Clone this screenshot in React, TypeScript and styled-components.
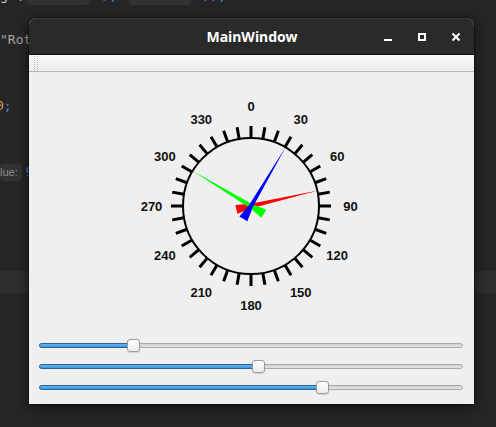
import React from "react";
import styled, { createGlobalStyle } from "styled-components";

const GlobalStyle = createGlobalStyle`
  html, body {
    margin: 0;
    padding: 0;
    background: #262626;
  }
  body {
    width: 496px;
    height: 427px;
    overflow: hidden;
    font-family: "Liberation Sans", Arial, sans-serif;
  }
`;

const Desktop = styled.div`
  position: relative;
  width: 496px;
  height: 427px;
  overflow: hidden;
  background: #262626;
`;

/* editor behind the window */
const Editor = styled.div`
  margin-top: -15px;
  font-family: "DejaVu Sans Mono", "Liberation Mono", monospace;
  font-size: 13px;
  color: #d0d0d0;
`;

const CodeLine = styled.div<{ $current?: boolean; $indent?: number }>`
  height: 22px;
  line-height: 22px;
  white-space: pre;
  text-indent: ${(p) => p.$indent ?? 0}px;
  background: ${(p) => (p.$current ? "#2e2e2e" : "transparent")};
`;

const Str = styled.span`
  color: #a9a9a9;
`;

const Num = styled.span`
  color: #d89b4c;
`;

const Punct = styled.span`
  color: #3b8be0;
`;

const Hint = styled.span<{ $w?: number }>`
  display: inline-block;
  width: ${(p) => (p.$w ? `${p.$w}px` : "auto")};
  height: 17px;
  line-height: 17px;
  padding: 0 4px 0 0;
  margin: 0 4px;
  vertical-align: middle;
  border-radius: 4px;
  background: #333333;
  color: #8c8c8c;
  font-family: "Liberation Sans", Arial, sans-serif;
  font-size: 11px;
  text-indent: 0;
`;

/* the Qt window */
const Window = styled.div`
  position: absolute;
  left: 29px;
  top: 18px;
  width: 445px;
  height: 386px;
  display: flex;
  flex-direction: column;
  border-radius: 8px 8px 0 0;
  overflow: hidden;
  background: #efefef;
  box-shadow: 0 3px 14px rgba(0, 0, 0, 0.6), 0 0 0 1px rgba(0, 0, 0, 0.35);
`;

const TitleBar = styled.div`
  flex: none;
  height: 36px;
  display: grid;
  grid-template-columns: 1fr auto 1fr;
  align-items: center;
  background: #2a2a2a;
  border-bottom: 1px solid #121212;
  box-shadow: inset 0 1px 0 #3a3a3a;
`;

const Title = styled.div`
  grid-column: 2;
  color: #ffffff;
  font-family: "Noto Sans", "DejaVu Sans", sans-serif;
  font-weight: 700;
  font-size: 14px;
  padding-left: 1px;
`;

const Controls = styled.div`
  grid-column: 3;
  justify-self: end;
  display: flex;
  padding-right: 1px;
`;

const ControlButton = styled.div`
  width: 34px;
  height: 36px;
  display: flex;
  align-items: center;
  justify-content: center;
  color: #ffffff;
`;

const ToolBar = styled.div`
  flex: none;
  height: 16px;
  display: flex;
  align-items: center;
  background: linear-gradient(#f8f8f8, #ededed);
  border-bottom: 1px solid #b7b7b7;
`;

const Grip = styled.div`
  width: 2px;
  height: 15px;
  margin-left: 5px;
  border-left: 1px dotted #b4b4b4;
  border-right: 1px dotted #b4b4b4;
`;

const Central = styled.div`
  flex: 1;
  display: flex;
  flex-direction: column;
  padding: 0 11px 6px 10px;
`;

const DialArea = styled.div`
  height: 263px;
  box-sizing: border-box;
  padding-top: 14px;
  display: flex;
  justify-content: center;
`;

const SliderRow = styled.div`
  height: 21px;
  display: flex;
  align-items: center;
`;

const Groove = styled.div`
  position: relative;
  flex: 1;
  height: 5px;
  box-sizing: border-box;
  border: 1px solid #a9a9a9;
  border-radius: 3px;
  background: linear-gradient(#d2d2d2, #e3e3e3);
`;

const Fill = styled.div`
  position: absolute;
  left: -1px;
  top: -1px;
  height: 5px;
  box-sizing: border-box;
  border: 1px solid #25649c;
  border-radius: 3px;
  background: linear-gradient(#63b4ee, #3c96d8);
`;

const Handle = styled.div`
  position: absolute;
  top: -5px;
  width: 13px;
  height: 13px;
  box-sizing: border-box;
  border: 1px solid #9a9a9a;
  border-radius: 3px;
  background: linear-gradient(#ffffff, #ececec);
  box-shadow: 0 1px 1px rgba(0, 0, 0, 0.12);
`;

function Slider({ value }: { value: number }) {
  // groove is 424px wide, the handle travels 424 - 13
  const left = value * 411;
  return (
    <SliderRow>
      <Groove>
        <Fill style={{ width: left + 7.5 }} />
        <Handle style={{ left: left - 1 }} />
      </Groove>
    </SliderRow>
  );
}

const ticks = Array.from({ length: 36 }, (_, i) => i * 10);
const labels = Array.from({ length: 12 }, (_, i) => i * 30);

const needles = [
  { angle: 77, color: "#ff0000" },
  { angle: 301, color: "#00ff00" },
  { angle: 30.5, color: "#0000ff" },
];

function Compass() {
  const rad = (d: number) => (d * Math.PI) / 180;
  return (
    <svg width="240" height="240" viewBox="-120 -120 240 240">
      <circle cx="0" cy="0" r="68" fill="none" stroke="#000" strokeWidth="2" />
      {ticks.map((d) => (
        <line
          key={d}
          x1="0"
          y1="-68"
          x2="0"
          y2="-80"
          stroke="#000"
          strokeWidth="3"
          transform={`rotate(${d})`}
        />
      ))}
      {labels.map((d) => (
        <text
          key={d}
          x={99.5 * Math.sin(rad(d))}
          y={-99.5 * Math.cos(rad(d))}
          textAnchor="middle"
          dominantBaseline="central"
          fontFamily='"Liberation Sans", Arial, sans-serif'
          fontWeight="700"
          fontSize="13"
          fill="#111"
        >
          {d}
        </text>
      ))}
      {needles.map((n) => (
        <polygon
          key={n.color}
          points="0,-69 2.2,0 4.6,15 -4.6,15 -2.2,0"
          fill={n.color}
          transform={`rotate(${n.angle})`}
        />
      ))}
    </svg>
  );
}

export default function App() {
  return (
    <>
      <GlobalStyle />
      <Desktop>
        <Editor>
          <CodeLine>
            ge(<Hint $w={58} />
            <Punct>0), </Punct>
            <Hint $w={58} />
            <Punct>0));</Punct>
          </CodeLine>
          <CodeLine> </CodeLine>
          <CodeLine>
            <Str>"Rotation"</Str>
          </CodeLine>
          <CodeLine> </CodeLine>
          <CodeLine> </CodeLine>
          <CodeLine $indent={-4}>
            <Num>0</Num>
            <Punct>;</Punct>
          </CodeLine>
          <CodeLine> </CodeLine>
          <CodeLine> </CodeLine>
          <CodeLine $indent={-4}>
            <Hint>lue:</Hint>
            <Punct>9</Punct>
          </CodeLine>
          <CodeLine> </CodeLine>
          <CodeLine> </CodeLine>
          <CodeLine> </CodeLine>
          <CodeLine> </CodeLine>
          <CodeLine $current> </CodeLine>
        </Editor>

        <Window>
          <TitleBar>
            <Title>MainWindow</Title>
            <Controls>
              <ControlButton>
                <svg width="16" height="16" viewBox="0 0 16 16">
                  <rect x="4" y="11" width="8" height="2" fill="currentColor" />
                </svg>
              </ControlButton>
              <ControlButton>
                <svg width="16" height="16" viewBox="0 0 16 16">
                  <rect x="5" y="6" width="6" height="6" fill="none" stroke="currentColor" strokeWidth="2" />
                </svg>
              </ControlButton>
              <ControlButton>
                <svg width="16" height="16" viewBox="0 0 16 16">
                  <path d="M4.5 5.5 L11.5 12.5 M11.5 5.5 L4.5 12.5" stroke="currentColor" strokeWidth="2" />
                </svg>
              </ControlButton>
            </Controls>
          </TitleBar>
          <ToolBar>
            <Grip />
          </ToolBar>
          <Central>
            <DialArea>
              <Compass />
            </DialArea>
            <Slider value={0.214} />
            <Slider value={0.519} />
            <Slider value={0.673} />
          </Central>
        </Window>
      </Desktop>
    </>
  );
}
